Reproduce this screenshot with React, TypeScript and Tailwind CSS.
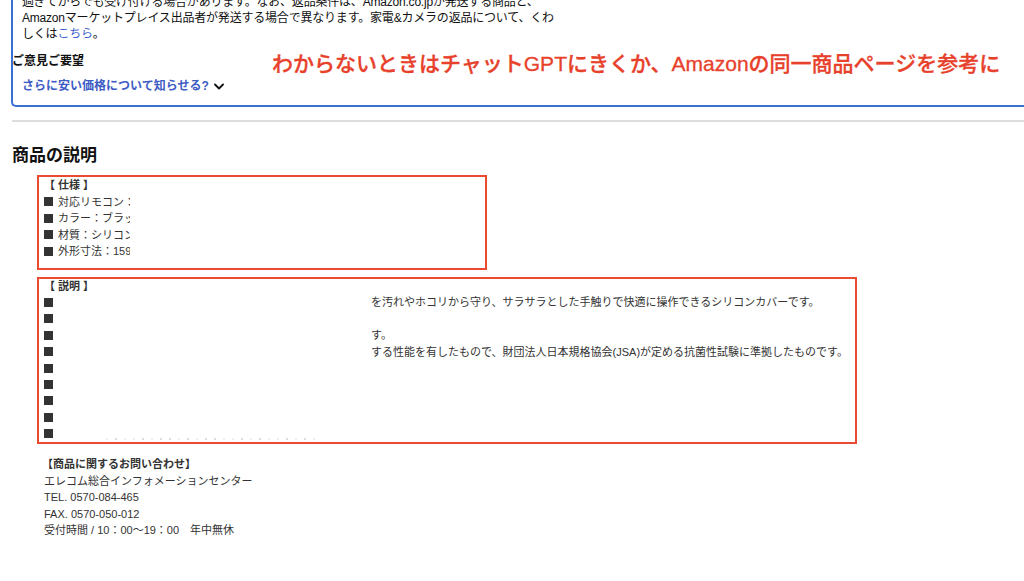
import React from "react";

const font = { fontFamily: '"Liberation Sans", "Noto Sans CJK JP", sans-serif' };

function Bullet() {
  return <span className="inline-block w-[9px] h-[9px] bg-[#333] mr-[5px] shrink-0" />;
}

const specRows = ["対応リモコン：ＸＸＸＸＸＸＸＸ", "カラー：ブラック", "材質：シリコン", "外形寸法：159×53×24mm"];

const descRows: string[] = [
  "を汚れやホコリから守り、サラサラとした手触りで快適に操作できるシリコンカバーです。",
  "",
  "す。",
  "する性能を有したもので、財団法人日本規格協会(JSA)が定める抗菌性試験に準拠したものです。",
  "",
  "",
  "",
  "",
];

const specks = [0, 1, 0, 0, 1, 0, 1, 1, 0, 1, 0, 1, 1, 0, 0, 1, 0, 1, 0, 0, 1, 0, 1, 0];

export default function App() {
  return (
    <div className="relative w-[1024px] h-[581px] overflow-hidden bg-white text-[#111]" style={font}>
      {/* Blue box */}
      <div className="ml-[11px] -mt-[6px] border-l-2 border-b-2 border-[#3a70d6] rounded-bl-[5px] pl-[9px] pb-[11px]">
        <div className="text-[12px] leading-[16px] text-[#111] tracking-[-0.2px]">
          <div>過ぎてからでも受け付ける場合があります。なお、返品条件は、Amazon.co.jpが発送する商品と、</div>
          <div>Amazonマーケットプレイス出品者が発送する場合で異なります。家電&amp;カメラの返品について、くわ</div>
          <div>
            しくは<span className="text-[#3f5fcf]">こちら</span>。
          </div>
        </div>
        <div className="-ml-[10px] mt-[11px] text-[12px] leading-[16px] font-bold text-[#111]">ご意見ご要望</div>
        <div className="mt-[9px] flex items-center text-[12px] leading-[16px] font-bold text-[#3d5bc4]">
          <span>さらに安い価格について知らせる?</span>
          <svg className="ml-[5px]" width="10" height="7" viewBox="0 0 10 7" fill="none">
            <path d="M1 1.5 L5 5.5 L9 1.5" stroke="#111" strokeWidth="1.8" strokeLinecap="round" strokeLinejoin="round" />
          </svg>
        </div>
      </div>

      {/* Annotation overlay */}
      <div className="absolute left-[272px] top-[49px] text-[21px] leading-[30px] font-medium text-[#e8412b] whitespace-nowrap [-webkit-text-stroke:0.3px_#e8412b]">
        わからないときはチャットGPTにきくか、Amazonの同一商品ページを参考に
      </div>

      {/* Divider */}
      <div className="ml-[12px] mt-[13px] h-[2px] bg-[#dddddd]" />

      {/* Heading */}
      <h2 className="ml-[12px] mt-[22px] text-[17px] leading-[24px] font-bold text-[#111]">商品の説明</h2>

      {/* Spec box */}
      <div className="ml-[37px] mt-[7px] w-[450px] h-[95px] border-2 border-[#ea4a31] pl-[5px] text-[11px] leading-[16.5px] text-[#333]">
        <div className="font-bold">【 仕様 】</div>
        {specRows.map((t) => (
          <div key={t} className="flex items-center">
            <Bullet />
            <span className="w-[72px] overflow-hidden whitespace-nowrap">{t}</span>
          </div>
        ))}
      </div>

      {/* Description box */}
      <div className="ml-[37px] mt-[7px] w-[820px] h-[167px] border-2 border-[#ea4a31] pl-[5px] text-[11px] leading-[16.4px] text-[#333]">
        <div className="font-bold -mt-[1px]">【 説明 】</div>
        {descRows.map((t, i) => (
          <div key={i} className="flex items-center h-[16.4px]">
            <Bullet />
            <span className="ml-[313px] whitespace-nowrap">{t}</span>
          </div>
        ))}
        <div className="flex items-center h-[16.4px]">
          <Bullet />
        </div>
        <div className="ml-[62px] -mt-[4px] h-[2px] overflow-hidden flex gap-[7px]">
          {specks.map((s, i) => (
            <span key={i} className={s ? "block w-[2px] h-[2px] bg-[#dcdcdc]" : "block w-[2px] h-[2px] bg-[#efefef]"} />
          ))}
        </div>
      </div>

      {/* Contact */}
      <div className="ml-[42px] mt-[12px] text-[11px] leading-[16.5px] text-[#333]">
        <div className="font-bold">【商品に関するお問い合わせ】</div>
        <div className="ml-[2px]">エレコム総合インフォメーションセンター</div>
        <div className="ml-[2px]">TEL. 0570-084-465</div>
        <div className="ml-[2px]">FAX. 0570-050-012</div>
        <div className="ml-[2px]">受付時間 / 10：00～19：00　年中無休</div>
      </div>
    </div>
  );
}
